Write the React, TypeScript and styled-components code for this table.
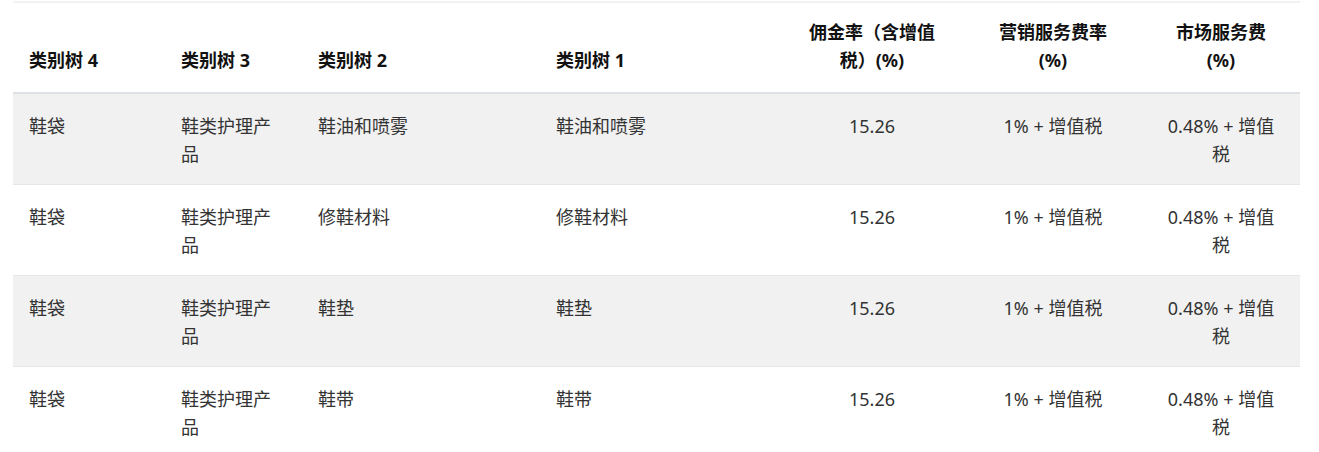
import styled, { createGlobalStyle } from "styled-components";

const GlobalStyle = createGlobalStyle`
  body {
    margin: 0;
    background: #fff;
    font-family: "Noto Sans", "Noto Sans CJK SC", sans-serif;
  }
`;

const Wrap = styled.div`
  padding: 1px 19px 0 13px;
`;

const Table = styled.table`
  width: 1287px;
  border-collapse: collapse;
  table-layout: fixed;
  border-top: 2px solid #f2f2f2;
  font-size: 18px;
  line-height: 28px;
`;

const Th = styled.th<{ $center?: boolean }>`
  padding: ${(p) => (p.$center ? "15px 21px 18px" : "15px 16px 18px")};
  vertical-align: bottom;
  text-align: ${(p) => (p.$center ? "center" : "left")};
  font-weight: 700;
  color: #111;
  border-bottom: 2px solid #dde1e5;
`;

const Row = styled.tr<{ $shade: boolean }>`
  background: ${(p) => (p.$shade ? "#f1f1f1" : "#fff")};
  border-bottom: 1px solid #e6e6e6;
`;

const Td = styled.td<{ $center?: boolean }>`
  padding: ${(p) => (p.$center ? "18px 21px 16px" : "18px 16px 16px")};
  vertical-align: top;
  text-align: ${(p) => (p.$center ? "center" : "left")};
  color: #333;
`;

const widths = [152, 137, 238, 240, 184, 178, 158];

const headers = [
  { label: "类别树 4" },
  { label: "类别树 3" },
  { label: "类别树 2" },
  { label: "类别树 1" },
  { label: "佣金率（含增值税）(%)", center: true },
  { label: "营销服务费率 (%)", center: true },
  { label: "市场服务费 (%)", center: true },
];

const rows = [
  ["鞋袋", "鞋类护理产品", "鞋油和喷雾", "鞋油和喷雾"],
  ["鞋袋", "鞋类护理产品", "修鞋材料", "修鞋材料"],
  ["鞋袋", "鞋类护理产品", "鞋垫", "鞋垫"],
  ["鞋袋", "鞋类护理产品", "鞋带", "鞋带"],
];

function App() {
  return (
    <Wrap>
      <GlobalStyle />
      <Table>
        <colgroup>
          {widths.map((w, i) => (
            <col key={i} style={{ width: w }} />
          ))}
        </colgroup>
        <thead>
          <tr>
            {headers.map((h) => (
              <Th key={h.label} $center={h.center}>
                {h.label}
              </Th>
            ))}
          </tr>
        </thead>
        <tbody>
          {rows.map((r, i) => (
            <Row key={i} $shade={i % 2 === 0}>
              {r.map((c, j) => (
                <Td key={j}>{c}</Td>
              ))}
              <Td $center>15.26</Td>
              <Td $center>1% + 增值税</Td>
              <Td $center>0.48% + 增值税</Td>
            </Row>
          ))}
        </tbody>
      </Table>
    </Wrap>
  );
}

export default App;
